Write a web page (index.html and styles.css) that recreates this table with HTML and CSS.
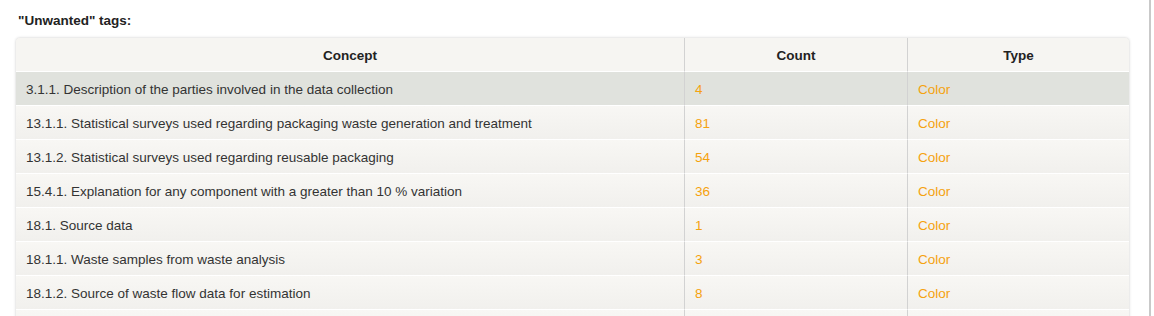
FILE: index.html
```html
<!DOCTYPE html>
<html>
<head>
<meta charset="utf-8">
<link rel="stylesheet" href="styles.css">
</head>
<body>
<div class="page">
  <h3 class="title">"Unwanted" tags:</h3>
  <table class="grid">
    <thead>
      <tr><th class="c1">Concept</th><th class="c2">Count</th><th class="c3">Type</th></tr>
    </thead>
    <tbody>
      <tr class="sel"><td>3.1.1. Description of the parties involved in the data collection</td><td class="num">4</td><td class="num">Color</td></tr>
      <tr><td>13.1.1. Statistical surveys used regarding packaging waste generation and treatment</td><td class="num">81</td><td class="num">Color</td></tr>
      <tr><td>13.1.2. Statistical surveys used regarding reusable packaging</td><td class="num">54</td><td class="num">Color</td></tr>
      <tr><td>15.4.1. Explanation for any component with a greater than 10 % variation</td><td class="num">36</td><td class="num">Color</td></tr>
      <tr><td>18.1. Source data</td><td class="num">1</td><td class="num">Color</td></tr>
      <tr><td>18.1.1. Waste samples from waste analysis</td><td class="num">3</td><td class="num">Color</td></tr>
      <tr><td>18.1.2. Source of waste flow data for estimation</td><td class="num">8</td><td class="num">Color</td></tr>
      <tr><td></td><td class="num"></td><td class="num"></td></tr>
    </tbody>
  </table>
</div>
</body>
</html>
```
FILE: styles.css
```css
html, body {
  margin: 0;
  padding: 0;
  background: #fff;
  overflow: hidden;
}
body {
  font-family: "Liberation Sans", Arial, sans-serif;
  font-size: 13.5px;
  color: #333;
}
.page {
  width: 1151px;
  height: 316px;
  border-right: 2px solid #c9c9c9;
  padding: 13px 0 0 16px;
  box-sizing: border-box;
}
.title {
  margin: 0 0 10px 2px;
  font-size: 13.5px;
  font-weight: bold;
  color: #222;
  line-height: 15px;
}
.grid {
  width: 1113px;
  border-collapse: separate;
  border-spacing: 0;
  border-radius: 4px;
  box-shadow: 0 0 3px rgba(0,0,0,0.22);
  background: #f3f2ef;
  table-layout: fixed;
}
.grid th {
  height: 31px;
  padding: 2px 0 0;
  font-weight: bold;
  font-size: 13.5px;
  color: #222;
  text-align: center;
  background: #f6f5f2;
  border-bottom: 1px solid #fff;
}
.grid th.c1 { width: 668px; border-top-left-radius: 4px; }
.grid th.c2 { width: 222px; border-left: 1px solid #d2d2d2; }
.grid th.c3 { border-left: 1px solid #d2d2d2; border-top-right-radius: 4px; }
.grid td {
  height: 31px;
  padding: 2px 10px 0;
  font-size: 13.5px;
  color: #333;
  border-bottom: 1px solid #fff;
  background: linear-gradient(#f8f7f4, #f1f0ed);
  white-space: nowrap;
}
.grid td + td {
  border-left: 1px solid #d2d2d2;
}
.grid td.num {
  color: #f5a20f;
}
.grid tr.sel td {
  background: #e0e2dd;
}
```
